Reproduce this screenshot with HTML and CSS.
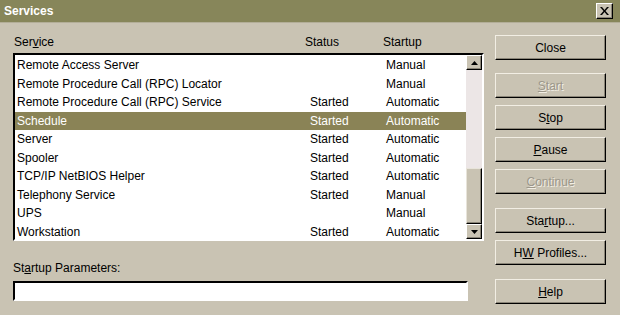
FILE: index.html
```html
<!DOCTYPE html>
<html lang="en">
<head>
	<meta charset="UTF-8">
	<title>Services</title>
	<link rel="stylesheet" href="styles.css">
</head>
<body>
	<div class="dialog">
		<div class="titlebar">
			<span class="title">Services</span>
			<span class="xbtn">
				<svg width="9" height="8" viewBox="0 0 9 8"><path d="M0 0h2l2.5 3L7 0h2L5.5 4 9 8H7L4.5 5 2 8H0l3.5-4z" fill="#000"/></svg>
			</span>
		</div>
		<div class="main">
			<div class="left">
				<div class="heads">
					<span>Ser<u>v</u>ice</span>
					<span>Status</span>
					<span>Startup</span>
				</div>
				<div class="listbox">
					<div class="rows">
						<div class="row"><span>Remote Access Server</span><span></span><span>Manual</span></div>
						<div class="row"><span>Remote Procedure Call (RPC) Locator</span><span></span><span>Manual</span></div>
						<div class="row"><span>Remote Procedure Call (RPC) Service</span><span>Started</span><span>Automatic</span></div>
						<div class="row sel"><span>Schedule</span><span>Started</span><span>Automatic</span></div>
						<div class="row"><span>Server</span><span>Started</span><span>Automatic</span></div>
						<div class="row"><span>Spooler</span><span>Started</span><span>Automatic</span></div>
						<div class="row"><span>TCP/IP NetBIOS Helper</span><span>Started</span><span>Automatic</span></div>
						<div class="row"><span>Telephony Service</span><span>Started</span><span>Manual</span></div>
						<div class="row"><span>UPS</span><span></span><span>Manual</span></div>
						<div class="row"><span>Workstation</span><span>Started</span><span>Automatic</span></div>
					</div>
					<div class="vscroll">
						<div class="arrow"><svg width="7" height="4" viewBox="0 0 7 4"><path d="M3.5 0L7 4H0z" fill="#000"/></svg></div>
						<div class="track"></div>
						<div class="thumb"></div>
						<div class="arrow"><svg width="7" height="4" viewBox="0 0 7 4"><path d="M0 0h7L3.5 4z" fill="#000"/></svg></div>
					</div>
				</div>
				<div class="param-label">St<u>a</u>rtup Parameters:</div>
				<div class="param-input"></div>
			</div>
			<div class="right">
				<div class="btn btn-close"><span>Close</span></div>
				<div class="btn off g1"><span><u>S</u>tart</span></div>
				<div class="btn g2"><span>S<u>t</u>op</span></div>
				<div class="btn g2"><span><u>P</u>ause</span></div>
				<div class="btn off g2"><span><u>C</u>ontinue</span></div>
				<div class="btn g3"><span>Sta<u>r</u>tup...</span></div>
				<div class="btn g2"><span>H<u>W</u> Profiles...</span></div>
				<div class="btn g3"><span><u>H</u>elp</span></div>
			</div>
		</div>
	</div>
</body>
</html>
```
FILE: styles.css
```css
body{
	margin: 0;
	font-family: "Liberation Sans", Arial, sans-serif;
	font-size: 12px;
	color: #000;
}
.dialog{
	width: 620px;
	height: 315px;
	background-color: #c9c3b3;
	overflow: hidden;
}
.titlebar{
	height: 22px;
	background-color: #87865a;
	border-bottom: 1px solid #b3ae98;
	display: flex;
	align-items: center;
	justify-content: space-between;
	padding: 0 7px 0 4px;
}
.title{
	color: #fff;
	font-weight: bold;
}
.xbtn{
	width: 17px;
	height: 16px;
	background-color: #c9c3b3;
	border: 1px solid;
	border-color: #fff #000 #000 #fff;
	box-shadow: inset -1px -1px #8a8578;
	display: flex;
	align-items: center;
	justify-content: center;
	box-sizing: border-box;
}
.main{
	display: flex;
	padding: 12px 0 0 13px;
}
.left{
	width: 471px;
}
.heads{
	display: grid;
	grid-template-columns: 291px 78px 1fr;
	padding-left: 1px;
	height: 18px;
}
.listbox{
	height: 188px;
	box-sizing: border-box;
	border: 2px solid;
	border-color: #000 #fff #fff #000;
	background-color: #fff;
	display: flex;
}
.rows{
	flex: 1;
	padding-top: 1px;
}
.row{
	height: 18.5px;
	display: grid;
	grid-template-columns: 293px 76px 1fr;
	align-items: center;
	padding-left: 2px;
}
.row.sel{
	background-color: #8a8356;
	color: #fff;
}
.vscroll{
	width: 16px;
	display: flex;
	flex-direction: column;
	background-color: #ece6e6;
}
.arrow{
	height: 15px;
	flex: none;
	background-color: #c9c3b3;
	border: 1px solid;
	border-color: #fff #000 #000 #fff;
	box-shadow: inset -1px -1px #8a8578;
	box-sizing: border-box;
	display: flex;
	align-items: center;
	justify-content: center;
}
.track{
	flex: 1;
}
.thumb{
	height: 56px;
	flex: none;
	background-color: #c9c3b3;
	border: 1px solid;
	border-color: #e8e4da #000 #000 #e8e4da;
	box-shadow: inset -1px -1px #8a8578;
	box-sizing: border-box;
}
.param-label{
	margin-top: 20px;
	height: 20px;
}
.param-input{
	width: 455px;
	height: 20px;
	box-sizing: border-box;
	border: 2px solid;
	border-color: #000 #fff #fff #000;
	background-color: #fff;
}
.right{
	margin-left: 11px;
	display: flex;
	flex-direction: column;
}
.btn{
	width: 111px;
	height: 25px;
	box-sizing: border-box;
	border: 1px solid;
	border-color: #f2eee4 #000 #000 #f2eee4;
	box-shadow: inset -1px -1px #8a8578;
	display: flex;
	align-items: center;
	justify-content: center;
}
.off{
	color: #9c978a;
	text-shadow: 1px 1px #f2eee4;
}
.g1{
	margin-top: 13px;
}
.g2{
	margin-top: 7px;
}
.g3{
	margin-top: 14px;
}
```
